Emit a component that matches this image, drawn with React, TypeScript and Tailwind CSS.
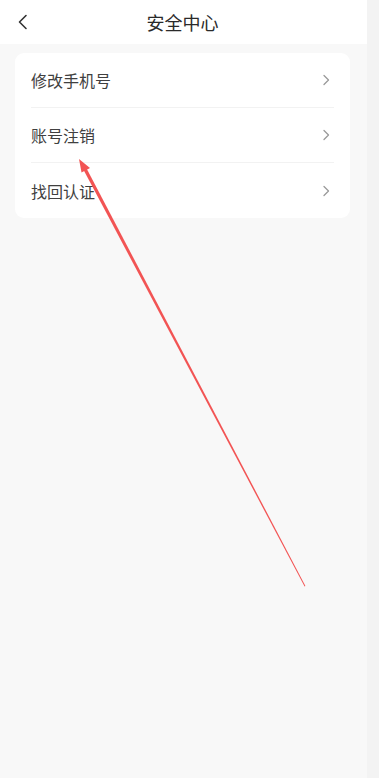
import React from "react";

const items = ["修改手机号", "账号注销", "找回认证"];

function Chevron({ className }: { className?: string }) {
  return (
    <svg width="8" height="12" viewBox="0 0 8 12" className={className} fill="none">
      <path d="M2 1.5L6.5 6L2 10.5" stroke="#9a9a9a" strokeWidth="1.3" strokeLinecap="round" strokeLinejoin="round" />
    </svg>
  );
}

export default function App() {
  return (
    <div
      className="relative flex h-[778px] w-[379px] overflow-hidden bg-[#f8f8f8]"
      style={{ fontFamily: '"Noto Sans CJK SC", "Noto Sans", sans-serif' }}
    >
      <div className="flex w-[367px] flex-col">
        <div className="relative flex h-[44px] items-center justify-center bg-white">
          <svg width="12" height="16" viewBox="0 0 12 16" className="absolute left-[17px] top-[14px]" fill="none">
            <path d="M9 1.5L2.5 8L9 14.5" stroke="#333333" strokeWidth="1.6" strokeLinecap="round" strokeLinejoin="round" />
          </svg>
          <span className="ml-[-2px] text-[18px] leading-none font-normal text-[#2a2a2a]">安全中心</span>
        </div>
        <div className="mx-[15px] mt-[9px] w-[335px] rounded-[9px] bg-white px-[16px]">
          {items.map((t, i) => (
            <div
              key={t}
              className={`flex h-[55px] items-center justify-between ${i < items.length - 1 ? "border-b border-[#f2f2f2]" : ""}`}
            >
              <span className="text-[16px] leading-none text-[#404040]">{t}</span>
              <Chevron className="mr-[4px]" />
            </div>
          ))}
        </div>
      </div>
      <div className="w-[12px] bg-[#f3f3f3]" />
      <svg className="pointer-events-none absolute left-0 top-0" width="379" height="778" viewBox="0 0 379 778">
        <polygon points="305.4,586 304.6,586.4 82.8,168.5 85.8,167" fill="#f25454" />
        <polygon points="79,159 90,168 81.5,172.5" fill="#f25454" />
      </svg>
    </div>
  );
}
